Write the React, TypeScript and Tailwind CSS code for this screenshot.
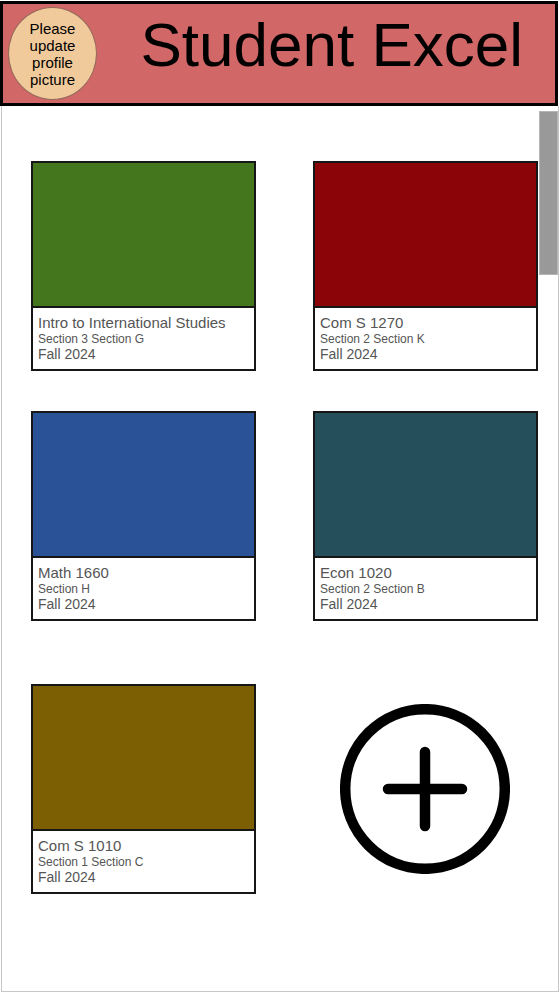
type Course = { title: string; section: string; term: string; color: string };

const currentCourses: Course[] = [
  { title: "Intro to International Studies", section: "Section 3 Section G", term: "Fall 2024", color: "bg-[#43761d]" },
  { title: "Com S 1270", section: "Section 2 Section K", term: "Fall 2024", color: "bg-[#8b0407]" },
  { title: "Math 1660", section: "Section H", term: "Fall 2024", color: "bg-[#295396]" },
  { title: "Econ 1020", section: "Section 2 Section B", term: "Fall 2024", color: "bg-[#264f5c]" },
];

const lastCourse: Course = {
  title: "Com S 1010",
  section: "Section 1 Section C",
  term: "Fall 2024",
  color: "bg-[#7b5f02]",
};

function CourseCard({ course }: { course: Course }) {
  return (
    <article className="border-2 border-[#161616] bg-white">
      <div className={`h-[145px] border-b-2 border-[#161616] ${course.color}`} />
      <div className="h-[61px] px-[5px] pt-[7px] text-[#555]">
        <h2 className="text-[15px] leading-4">{course.title}</h2>
        <p className="text-[12px] leading-4">{course.section}</p>
        <p className="text-[14px] leading-[15px]">{course.term}</p>
      </div>
    </article>
  );
}

export default function App() {
  return (
    <div className="relative bg-white pt-px font-['Liberation_Sans',Arial,sans-serif]">
      <header className="mr-px flex h-[105px] border-[3px] border-black bg-[#d16767] pl-[5px]">
        <button
          type="button"
          className="mt-[3px] h-[93px] w-[89px] shrink-0 rounded-[50%] border border-[#94695a] bg-[#f1ca9b] px-4 text-center text-[15px] leading-[17px] text-black"
        >
          Please update profile picture
        </button>
        <h1 className="grow pt-1.5 pr-8 text-right text-[62px] leading-[70px] whitespace-nowrap text-black">
          Student Excel
        </h1>
      </header>

      <main className="ml-px border border-t-0 border-[#c4c6c8] pt-[55px] pr-5 pb-[97px] pl-[29px]">
        <div className="grid grid-cols-2 gap-x-[57px] gap-y-10">
          {currentCourses.map((course) => (
            <CourseCard key={course.title} course={course} />
          ))}
        </div>
        <div className="mt-[63px] grid grid-cols-2 gap-x-[57px]">
          <CourseCard course={lastCourse} />
          <button type="button" aria-label="Add course" className="flex items-center justify-center pr-px">
            <svg width="170" height="170" viewBox="0 0 170 170" fill="none" stroke="#000" strokeLinecap="round">
              <circle cx="85" cy="85" r="79.8" strokeWidth="10.5" />
              <path d="M85 48v74M48 85h74" strokeWidth="10.5" />
            </svg>
          </button>
        </div>
      </main>

      <div className="absolute top-[111px] right-px h-[164px] w-[19px] border border-[#b5b5b5] bg-[#999]" />
    </div>
  );
}
